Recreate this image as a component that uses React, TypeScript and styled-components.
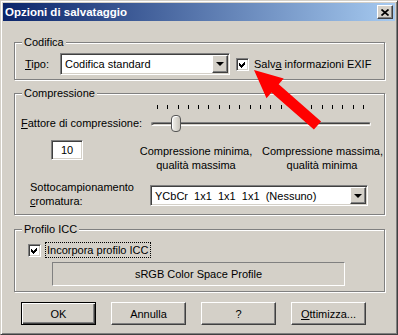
import React from "react";
import styled, { createGlobalStyle, css } from "styled-components";

const GlobalStyle = createGlobalStyle`
    html, body {
        margin: 0;
        padding: 0;
        background: #d4d0c8;
    }
    body {
        font-family: "Liberation Sans", Arial, sans-serif;
        font-size: 11px;
        color: #000;
    }
`;

const sunken = css`
    border: 1px solid;
    border-color: #808080 #ffffff #ffffff #808080;
    box-shadow: inset 1px 1px #404040, inset -1px -1px #d4d0c8;
`;

const raised = css`
    border: 1px solid;
    border-color: #ffffff #404040 #404040 #ffffff;
    box-shadow: inset -1px -1px #808080, inset 1px 1px #d4d0c8;
`;

export default function App() {
    const ticks = Array.from({ length: 21 });
    return (
        <>
            <GlobalStyle />
            <Window>
                <TitleBar>
                    <Title>Opzioni di salvataggio</Title>
                    <CloseButton>
                        <svg width="8" height="7" viewBox="0 0 8 7">
                            <path
                                d="M0.5 0.5 L7.5 6.5 M7.5 0.5 L0.5 6.5"
                                stroke="#000"
                                strokeWidth="1.7"
                            />
                        </svg>
                    </CloseButton>
                </TitleBar>

                <Body>
                    <Group $height={38}>
                        <Legend>Codifica</Legend>
                        <CodificaRow>
                            <FieldLabel $width={35}>
                                <U>T</U>ipo:
                            </FieldLabel>
                            <Select $width={170} $height={22}>
                                <SelectText>Codifica standard</SelectText>
                                <DropButton>
                                    <Triangle />
                                </DropButton>
                            </Select>
                            <Check $margin={6}>
                                <CheckMark />
                            </Check>
                            <CheckLabel>
                                Salv<U>a</U> informazioni EXIF
                            </CheckLabel>
                        </CodificaRow>
                    </Group>

                    <Group $height={122} $gap={13}>
                        <Legend>Compressione</Legend>
                        <SliderRow>
                            <SliderLabel>
                                <U>F</U>attore di compressione:
                            </SliderLabel>
                            <Slider>
                                <Ticks>
                                    {ticks.map((_, i) => (
                                        <Tick key={i} />
                                    ))}
                                </Ticks>
                                <TrackArea>
                                    <Track />
                                    <Thumb />
                                </TrackArea>
                            </Slider>
                        </SliderRow>

                        <ValueRow>
                            <NumberBox>10</NumberBox>
                            <Caption $margin={53}>
                                Compressione minima,
                                <br />
                                qualità massima
                            </Caption>
                            <Caption $margin={6}>
                                Compressione massima,
                                <br />
                                qualità minima
                            </Caption>
                        </ValueRow>

                        <ChromaRow>
                            <ChromaLabel>
                                Sottocampionamento
                                <br />
                                <U>c</U>romatura:
                            </ChromaLabel>
                            <Select $width={218} $height={21}>
                                <SelectText>
                                    YCbCr&nbsp; 1x1&nbsp; 1x1&nbsp; 1x1&nbsp; (Nessuno)
                                </SelectText>
                                <DropButton>
                                    <Triangle />
                                </DropButton>
                            </Select>
                        </ChromaRow>
                    </Group>

                    <Group $height={63} $gap={14}>
                        <Legend>Profilo ICC</Legend>
                        <IccRow>
                            <Check $margin={0}>
                                <CheckMark />
                            </Check>
                            <FocusLabel>Incorpora profilo ICC</FocusLabel>
                        </IccRow>
                        <StaticBox>sRGB Color Space Profile</StaticBox>
                    </Group>

                    <ButtonRow>
                        <Button $default>OK</Button>
                        <Button>Annulla</Button>
                        <Button>?</Button>
                        <Button>
                            <U>O</U>ttimizza...
                        </Button>
                    </ButtonRow>
                </Body>

                <ArrowLayer viewBox="0 0 398 335" width="398" height="335">
                    <polygon
                        points="253,69 282.7,77.6 277.7,83.3 320.1,120.4 312.9,128.6 270.5,91.5 265.5,97.2"
                        fill="#ff0000"
                    />
                </ArrowLayer>
            </Window>
        </>
    );
}

function CheckMark() {
    return (
        <svg width="11" height="11" viewBox="0 0 11 11" shapeRendering="crispEdges">
            <polygon points="2,4 4,6 8,2 8,5 4,9 2,7" fill="#000" />
        </svg>
    );
}

const Window = styled.div`
    position: relative;
    width: 398px;
    height: 335px;
    box-sizing: border-box;
    background: #d4d0c8;
    border: 1px solid;
    border-color: #d4d0c8 #404040 #404040 #d4d0c8;
    box-shadow: inset 1px 1px #ffffff, inset -1px -1px #808080;
    padding: 2px 2px 0 2px;
    overflow: hidden;
`;

const TitleBar = styled.div`
    display: flex;
    align-items: center;
    justify-content: space-between;
    height: 18px;
    padding: 0 2px 0 2px;
    background: linear-gradient(to right, #0a246a, #a6caf0);
`;

const Title = styled.span`
    color: #fff;
    font-weight: bold;
    font-size: 11.5px;
    padding-left: 0;
`;

const CloseButton = styled.div`
    display: flex;
    align-items: center;
    justify-content: center;
    width: 16px;
    height: 14px;
    box-sizing: border-box;
    background: #d4d0c8;
    ${raised};
`;

const Body = styled.div`
    display: flex;
    flex-direction: column;
    padding: 21px 0 0 11px;
`;

const Group = styled.div<{ $height: number; $gap?: number }>`
    position: relative;
    display: flex;
    flex-direction: column;
    width: 371px;
    height: ${(p) => p.$height}px;
    margin-top: ${(p) => p.$gap ?? 0}px;
    box-sizing: border-box;
    border: 1px solid #808080;
    box-shadow: inset 1px 1px #ffffff, 1px 1px #ffffff;
`;

const Legend = styled.span`
    position: absolute;
    top: -7px;
    left: 7px;
    padding: 0 2px;
    line-height: 13px;
    background: #d4d0c8;
`;

const U = styled.span`
    text-decoration: underline;
`;

const CodificaRow = styled.div`
    display: flex;
    align-items: center;
    padding: 10px 0 0 10px;
`;

const FieldLabel = styled.span<{ $width: number }>`
    width: ${(p) => p.$width}px;
    flex-shrink: 0;
`;

const Select = styled.div<{ $width: number; $height: number }>`
    display: flex;
    align-items: center;
    justify-content: space-between;
    width: ${(p) => p.$width}px;
    height: ${(p) => p.$height}px;
    box-sizing: border-box;
    padding: 1px;
    background: #fff;
    flex-shrink: 0;
    ${sunken};
`;

const SelectText = styled.span`
    padding-left: 3px;
    white-space: nowrap;
`;

const DropButton = styled.div`
    display: flex;
    align-items: center;
    justify-content: center;
    width: 16px;
    height: 100%;
    box-sizing: border-box;
    background: #d4d0c8;
    ${raised};
`;

const Triangle = styled.div`
    width: 0;
    height: 0;
    border-left: 4px solid transparent;
    border-right: 4px solid transparent;
    border-top: 4px solid #000;
`;

const Check = styled.div<{ $margin: number }>`
    display: flex;
    align-items: center;
    justify-content: center;
    width: 13px;
    height: 13px;
    box-sizing: border-box;
    margin-left: ${(p) => p.$margin}px;
    background: #fff;
    flex-shrink: 0;
    ${sunken};
`;

const CheckLabel = styled.span`
    margin-left: 5px;
    white-space: nowrap;
`;

const SliderRow = styled.div`
    display: flex;
    padding-left: 6px;
`;

const SliderLabel = styled.span`
    align-self: flex-end;
    width: 130px;
    line-height: 17px;
    white-space: nowrap;
`;

const Slider = styled.div`
    display: flex;
    flex-direction: column;
    width: 220px;
`;

const Ticks = styled.div`
    display: flex;
    justify-content: space-between;
    width: 207px;
    height: 4px;
    margin: 11px 0 0 6px;
`;

const Tick = styled.div`
    width: 1px;
    height: 4px;
    background: #000;
`;

const TrackArea = styled.div`
    position: relative;
    display: flex;
    align-items: center;
    height: 17px;
    margin-top: 6px;
`;

const Track = styled.div`
    width: 100%;
    height: 4px;
    box-sizing: border-box;
    border-radius: 2px;
    border: 1px solid;
    border-color: #808080 #ffffff #ffffff #808080;
    background: #d4d0c8;
    box-shadow: inset 1px 1px #404040;
`;

const Thumb = styled.div`
    position: absolute;
    left: 20px;
    top: 0;
    width: 10px;
    height: 17px;
    box-sizing: border-box;
    border-radius: 4px;
    border: 1px solid #555;
    background: linear-gradient(to right, #f4f3ee, #c8c4bb);
    box-shadow: inset 1px 1px #fff;
`;

const ValueRow = styled.div`
    display: flex;
    align-items: flex-start;
    margin-top: 8px;
    padding-left: 36px;
`;

const NumberBox = styled.div`
    width: 32px;
    height: 20px;
    box-sizing: border-box;
    display: flex;
    align-items: center;
    justify-content: center;
    background: #fff;
    flex-shrink: 0;
    ${sunken};
`;

const Caption = styled.div<{ $margin: number }>`
    width: 120px;
    margin-left: ${(p) => p.$margin}px;
    padding-top: 4px;
    line-height: 14px;
    text-align: center;
    white-space: nowrap;
`;

const ChromaRow = styled.div`
    display: flex;
    align-items: flex-start;
    margin-top: 8px;
    padding-left: 15px;
`;

const ChromaLabel = styled.div`
    width: 120px;
    line-height: 14px;
    flex-shrink: 0;
    & + div {
        margin-top: 5px;
    }
`;

const IccRow = styled.div`
    display: flex;
    align-items: center;
    height: 16px;
    margin-top: 12px;
    padding-left: 13px;
`;

const FocusLabel = styled.span`
    margin-left: 4px;
    padding: 0 1px;
    line-height: 14px;
    border: 1px dotted #000;
`;

const StaticBox = styled.div`
    display: flex;
    align-items: center;
    justify-content: center;
    width: 293px;
    height: 24px;
    box-sizing: border-box;
    margin: 4px 0 0 37px;
    border: 1px solid;
    border-color: #808080 #ffffff #ffffff #808080;
`;

const ButtonRow = styled.div`
    display: flex;
    gap: 15px;
    margin-top: 10px;
    padding-left: 7px;
`;

const Button = styled.div<{ $default?: boolean }>`
    display: flex;
    align-items: center;
    justify-content: center;
    width: 75px;
    height: 23px;
    box-sizing: border-box;
    background: #d4d0c8;
    ${(p) =>
        p.$default
            ? css`
                  border: 1px solid #000;
                  box-shadow: inset 1px 1px #fff, inset -1px -1px #404040,
                      inset -2px -2px #808080;
              `
            : raised};
`;

const ArrowLayer = styled.svg`
    position: absolute;
    top: 0;
    left: 0;
    pointer-events: none;
`;
